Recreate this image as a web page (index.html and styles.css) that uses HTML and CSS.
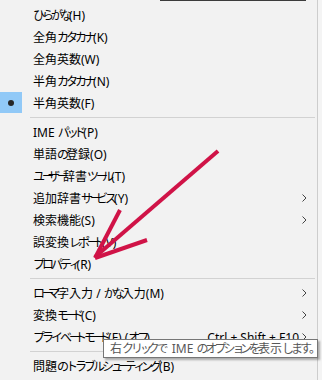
FILE: index.html
```html
<!DOCTYPE html>
<html lang="ja">
<head>
<meta charset="utf-8">
<link rel="stylesheet" href="styles.css">
</head>
<body>
<div class="menu">
  <div class="item"><span class="label"><span class="k">ひらがな</span>(H)</span></div>
  <div class="item"><span class="label">全角<span class="k">カタカナ</span>(K)</span></div>
  <div class="item"><span class="label">全角英数(W)</span></div>
  <div class="item"><span class="label">半角<span class="k">カタカナ</span>(N)</span></div>
  <div class="item checked"><span class="check"><span class="dot"></span></span><span class="label">半角英数(F)</span></div>
  <div class="sep"></div>
  <div class="item"><span class="label">IME <span class="k">パ<span class="s">ッ</span>ド</span>(P)</span></div>
  <div class="item"><span class="label">単語<span class="k">の</span>登録(O)</span></div>
  <div class="item"><span class="label"><span class="k">ユ<span class="c">ー</span>ザ<span class="c">ー</span></span>辞書<span class="k">ツ<span class="c">ー</span>ル</span>(T)</span></div>
  <div class="item"><span class="label">追加辞書<span class="k">サ<span class="c">ー</span>ビス</span>(Y)</span><svg class="chev" width="5" height="8" viewBox="0 0 5 8"><path d="M0.5 0.5 L4 4 L0.5 7.5" fill="none" stroke="#444" stroke-width="1"/></svg></div>
  <div class="item"><span class="label">検索機能(S)</span><svg class="chev" width="5" height="8" viewBox="0 0 5 8"><path d="M0.5 0.5 L4 4 L0.5 7.5" fill="none" stroke="#444" stroke-width="1"/></svg></div>
  <div class="item"><span class="label">誤変換<span class="k">レポ<span class="c">ー</span>ト</span>(V)</span></div>
  <div class="item"><span class="label"><span class="k">プロパテ<span class="s">ィ</span></span>(R)</span></div>
  <div class="sep"></div>
  <div class="item"><span class="label"><span class="k">ロ<span class="c">ー</span>マ</span>字入力 / <span class="k">かな</span>入力(M)</span><svg class="chev" width="5" height="8" viewBox="0 0 5 8"><path d="M0.5 0.5 L4 4 L0.5 7.5" fill="none" stroke="#444" stroke-width="1"/></svg></div>
  <div class="item"><span class="label">変換<span class="k">モ<span class="c">ー</span>ド</span>(C)</span><svg class="chev" width="5" height="8" viewBox="0 0 5 8"><path d="M0.5 0.5 L4 4 L0.5 7.5" fill="none" stroke="#444" stroke-width="1"/></svg></div>
  <div class="item"><span class="label"><span class="k">プライベ<span class="c">ー</span>トモ<span class="c">ー</span>ド</span>(F) (<span class="k">オフ</span>)</span><span class="shortcut">Ctrl + Shift + F10</span><svg class="chev" width="5" height="8" viewBox="0 0 5 8"><path d="M0.5 0.5 L4 4 L0.5 7.5" fill="none" stroke="#444" stroke-width="1"/></svg></div>
  <div class="sep"></div>
  <div class="item"><span class="label">問題<span class="k">のトラブルシ<span class="s">ュ</span><span class="c">ー</span>テ<span class="s">ィ</span>ング</span>(B)</span></div>

  <div class="tooltip">右<span class="k">クリ<span class="s">ッ</span>ク</span>で IME <span class="k">のオプシ<span class="s">ョ</span>ンを</span>表示<span class="k">します</span>。</div>

  <svg class="arrow" width="322" height="380" viewBox="0 0 322 380">
    <g stroke="#d01347" stroke-width="4" stroke-linecap="butt" fill="none">
      <line x1="218" y1="151" x2="95" y2="257"/>
      <line x1="120" y1="210" x2="95" y2="258"/>
      <line x1="147" y1="240" x2="95" y2="258"/>
    </g>
  </svg>
</div>
</body>
</html>
```

FILE: styles.css
```css
html, body {
  margin: 0;
  padding: 0;
  background: #f4f4f4;
}

body {
  width: 322px;
  height: 380px;
  overflow: hidden;
  font-family: "Noto Sans", "Noto Sans CJK JP", sans-serif;
  font-size: 12px;
  color: #000;
}

.menu {
  position: relative;
  width: 318px;
  height: 380px;
  box-sizing: border-box;
  padding-top: 4px;
  background: #f2f2f2;
  border-right: 1px solid #cdcdcd;
  display: flex;
  flex-direction: column;
}

.menu::before {
  content: "";
  position: absolute;
  top: 0;
  left: 160px;
  width: 146px;
  height: 1px;
  background: #3c3c3c;
}

.k {
  letter-spacing: -3px;
}

.k .c {
  letter-spacing: -6px;
}

.k .s {
  letter-spacing: -4.5px;
}

.item {
  position: relative;
  height: 22px;
  flex: none;
  display: flex;
  align-items: center;
  padding-left: 33px;
  padding-right: 10px;
  white-space: nowrap;
}

.label {
  flex: 1;
}

.check {
  position: absolute;
  left: 0;
  top: 0;
  width: 22px;
  height: 21px;
  background: #91c9f7;
  display: flex;
  align-items: center;
  justify-content: center;
}

.dot {
  width: 6px;
  height: 6px;
  border-radius: 50%;
  background: #262626;
}

.shortcut {
  margin-right: 3px;
}

.chev {
  flex: none;
  display: block;
}

.sep {
  flex: none;
  height: 7px;
  margin-left: 30px;
  margin-right: 2px;
  display: flex;
  align-items: center;
}

.sep::after {
  content: "";
  display: block;
  width: 100%;
  height: 1px;
  background: #d2d2d2;
}

.tooltip {
  position: absolute;
  left: 103px;
  top: 339px;
  width: 215px;
  height: 19px;
  box-sizing: border-box;
  background: #fff;
  border: 1px solid #767676;
  box-shadow: 2px 2px 2px rgba(0, 0, 0, 0.3);
  color: #575757;
  padding-left: 6px;
  line-height: 17px;
  white-space: nowrap;
}

.arrow {
  position: absolute;
  left: 0;
  top: 0;
  pointer-events: none;
}
```
